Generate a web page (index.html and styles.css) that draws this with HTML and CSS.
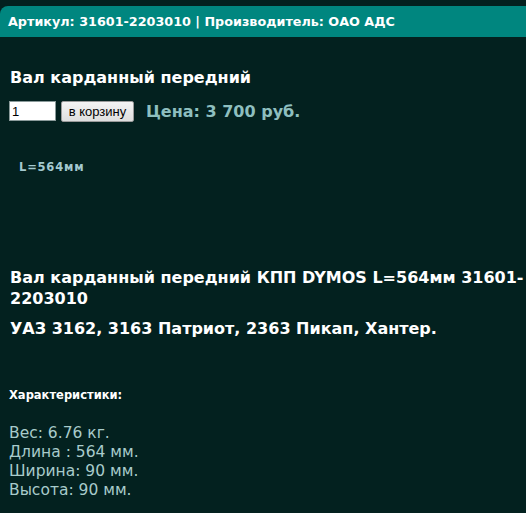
FILE: index.html
```html
<!DOCTYPE html>
<html lang="ru">
<head>
<meta charset="utf-8">
<title>Вал карданный передний</title>
<link rel="stylesheet" href="styles.css">
</head>
<body>
<div class="header">Артикул: 31601-2203010 | Производитель: ОАО АДС</div>
<div class="content">
  <h1 class="title">Вал карданный передний</h1>
  <div class="buy">
    <input class="qty" type="text" value="1">
    <button class="cart" type="button">в корзину</button>
    <span class="price">Цена: 3 700 руб.</span>
  </div>
  <div class="photo">L=564мм</div>
  <h2 class="desc">Вал карданный передний КПП DYMOS L=564мм 31601-2203010</h2>
  <h2 class="desc desc2">УАЗ 3162, 3163 Патриот, 2363 Пикап, Хантер.</h2>
  <div class="chars-title">Характеристики:</div>
  <div class="chars">
    <div>Вес: 6.76 кг.</div>
    <div>Длина : 564 мм.</div>
    <div>Ширина: 90 мм.</div>
    <div>Высота: 90 мм.</div>
  </div>
</div>
</body>
</html>
```
FILE: styles.css
```css
html, body {
  margin: 0;
  padding: 0;
  background: #03211f;
  font-family: "DejaVu Sans", Verdana, sans-serif;
  color: #ffffff;
  overflow: hidden;
}
.header {
  margin-top: 6px;
  height: 31px;
  line-height: 31px;
  background: #00867f;
  border-top-left-radius: 8px;
  padding-left: 8px;
  font-size: 12.75px;
  font-weight: bold;
  white-space: nowrap;
}
.content {
  padding-left: 10px;
  width: 520px;
}
.title {
  margin: 31px 0 0 0;
  font-size: 16px;
  line-height: 19px;
  font-weight: bold;
}
.buy {
  display: flex;
  align-items: center;
  margin-top: 13px;
  margin-left: -1px;
  height: 22px;
}
.qty {
  box-sizing: border-box;
  width: 47px;
  height: 20px;
  border: 1px solid #8a9a9a;
  padding: 1px 2px;
  font-family: "Liberation Sans", Arial, sans-serif;
  font-size: 13px;
  background: #fff;
  color: #000;
  margin: 0;
}
.cart {
  box-sizing: border-box;
  margin: 0 0 0 5px;
  width: 73px;
  height: 21px;
  padding: 0;
  border: 1px solid #9a9a9a;
  border-radius: 2px;
  background: linear-gradient(#f4f4f4, #dedede);
  font-family: "Liberation Sans", Arial, sans-serif;
  font-size: 13px;
  color: #000;
}
.price {
  margin-left: 12px;
  font-size: 16px;
  font-weight: bold;
  color: #8ebfbf;
}
.photo {
  margin: 38px 0 0 9px;
  height: 107px;
  font-size: 11.5px;
  font-weight: bold;
  letter-spacing: 0.8px;
  color: #a3c9cf;
}
.desc {
  margin: 0;
  font-size: 16px;
  line-height: 21px;
  font-weight: bold;
}
.desc2 {
  margin-top: 9px;
}
.chars-title {
  margin: 49px 0 0 -1px;
  font-size: 11.5px;
  font-weight: bold;
}
.chars {
  margin: 22px 0 0 -1px;
  font-size: 15.5px;
  line-height: 19px;
  color: #a8cbcb;
}
```
